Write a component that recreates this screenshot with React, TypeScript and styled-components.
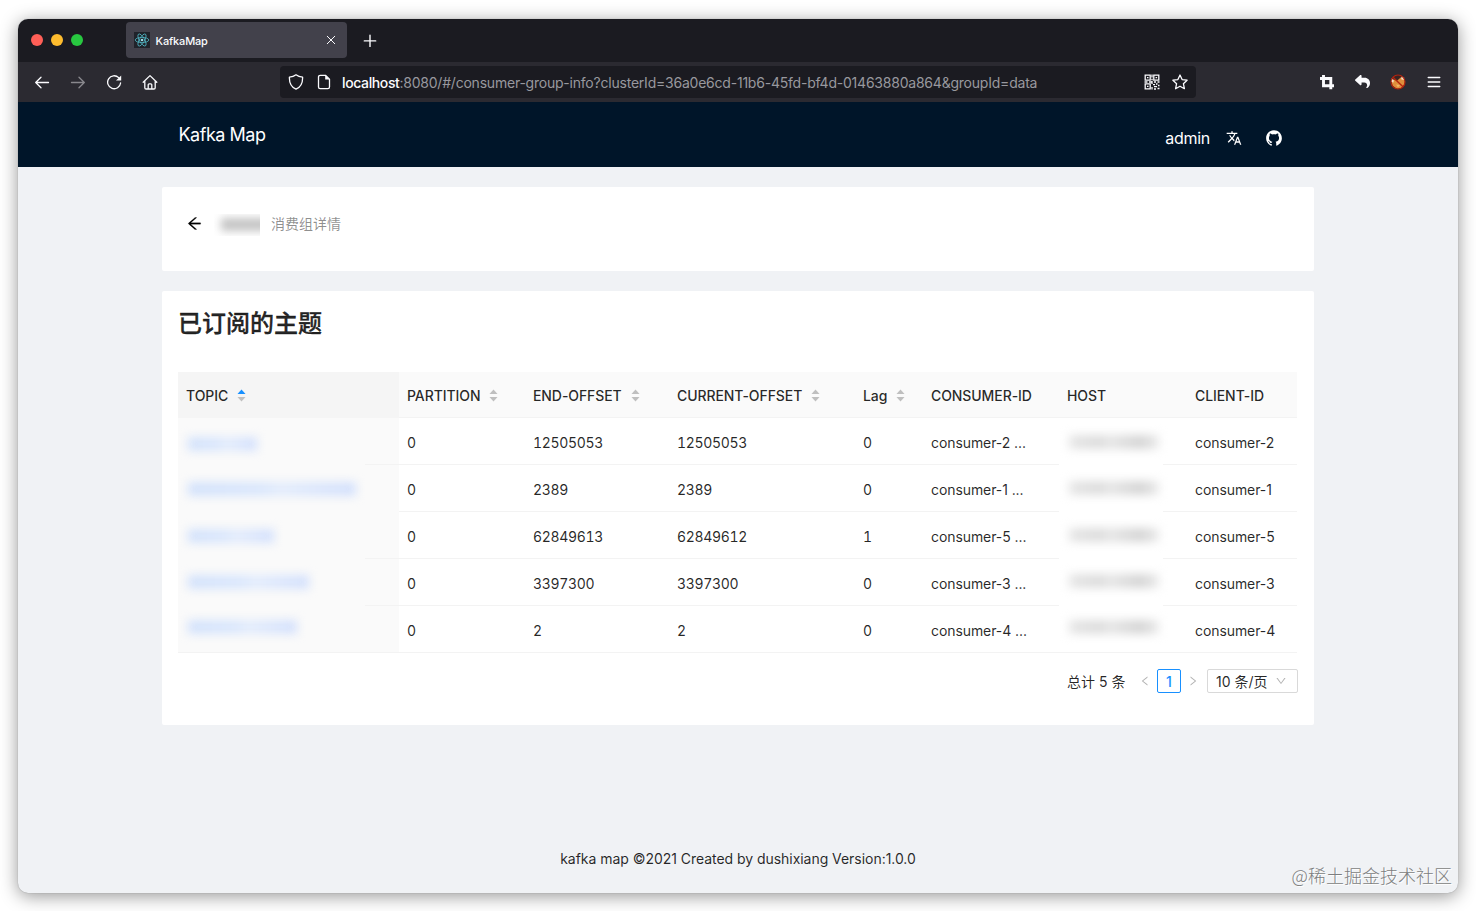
import React from 'react';
import styled, { createGlobalStyle, css } from 'styled-components';
import { AiOutlineArrowLeft, AiOutlineLeft, AiOutlineRight, AiOutlineDown, AiFillGithub } from 'react-icons/ai';
import { MdTranslate } from 'react-icons/md';
import { FaReply } from 'react-icons/fa6';

const GlobalStyle = createGlobalStyle`
  * { box-sizing: border-box; }
  body {
    margin: 0;
    background: #fff;
    font-family: Inter, "Noto Sans CJK SC", sans-serif;
    font-size: 14px;
    color: rgba(0, 0, 0, 0.85);
  }
  svg { display: block; flex: none; }
`;

const Desktop = styled.div`
  height: 911px;
  padding: 19px 18px 18px;
  overflow: hidden;
`;

const BrowserWindow = styled.div`
  position: relative;
  height: 874px;
  display: flex;
  flex-direction: column;
  border-radius: 10px;
  overflow: hidden;
  background: #f0f2f5;
  box-shadow: 0 0 1px rgba(0, 0, 0, 0.35), 0 3px 18px rgba(0, 0, 0, 0.42);
`;

const TabBar = styled.div`
  height: 43px;
  flex: none;
  display: flex;
  align-items: center;
  background: #1b1b21;
  padding: 0 0 1px 13px;
`;

const Lights = styled.div`
  display: flex;
  gap: 8px;
  width: 95px;
`;

const Light = styled.span<{ $color: string }>`
  width: 12px;
  height: 12px;
  border-radius: 50%;
  background: ${(p) => p.$color};
`;

const Tab = styled.div`
  width: 221px;
  height: 36px;
  border-radius: 4px;
  background: #42414b;
  display: flex;
  align-items: center;
  padding: 0 11px 0 8px;
  color: #fbfbfe;
  font-size: 11px;
  font-weight: 500;
  letter-spacing: -0.15px;
`;

const TabTitle = styled.span`
  flex: 1;
  padding: 2px 0 0 5.5px;
`;

const NewTab = styled.div`
  margin-left: 16px;
`;

const Toolbar = styled.div`
  height: 40px;
  flex: none;
  display: flex;
  align-items: center;
  background: #2b2a31;
  color: #fbfbfe;
  padding: 0 16px;
`;

const NavButtons = styled.div`
  width: 246px;
  display: flex;
  gap: 20px;
`;

const Dim = styled.span`
  opacity: 0.45;
`;

const AddressBar = styled.div`
  width: 916px;
  height: 32px;
  border-radius: 4px;
  background: #1b1b21;
  display: flex;
  align-items: center;
  gap: 12px;
  padding: 0 8px;
`;

const Url = styled.span`
  flex: 1;
  font-size: 14px;
  letter-spacing: -0.22px;
  color: #98989e;
  padding-top: 1px;
  margin-left: -2px;
  white-space: nowrap;
`;

const UrlHost = styled.span`
  color: #fbfbfe;
  font-weight: 500;
  letter-spacing: -0.38px;
`;

const Extensions = styled.div`
  flex: 1;
  display: flex;
  justify-content: flex-end;
  gap: 20px;
`;

const Header = styled.header`
  height: 65px;
  flex: none;
  display: flex;
  justify-content: space-between;
  background: #001529;
  padding: 0 175px 0 160.5px;
  color: #fff;
`;

const Brand = styled.div`
  font-size: 18px;
  line-height: 66px;
  letter-spacing: -0.48px;
`;

const HeaderActions = styled.div`
  display: flex;
  align-items: center;
  padding-top: 6px;
  font-size: 16px;
  letter-spacing: -0.3px;
`;

const UserName = styled.span`
  margin-right: 16px;
`;

const Repository = styled.span`
  margin-left: 23px;
`;

const Content = styled.main`
  flex: 1;
  display: flex;
  flex-direction: column;
  gap: 20px;
  padding: 20px 144px 0;
`;

const Card = styled.section<{ $height: number }>`
  height: ${(p) => p.$height}px;
  background: #fff;
  border-radius: 2px;
`;

const PageHeading = styled.div`
  display: flex;
  align-items: center;
  padding: 22px 24px 0;
  height: 50px;
  color: #000;
`;

const Subtitle = styled.span`
  color: rgba(0, 0, 0, 0.45);
  font-size: 14px;
`;

const HiddenName = styled.span`
  width: 46px;
  height: 22px;
  margin: 3px 11px 0 11px;
  overflow: hidden;
  display: flex;
  align-items: center;
`;

const HiddenNameInk = styled.span`
  width: 50px;
  flex: none;
  height: 13px;
  margin: 0 0 0 7px;
  background: #c4c4c4;
  filter: blur(4px);
`;

const TableCard = styled(Card)`
  padding: 0 16px;
`;

const Title = styled.h2`
  margin: 0;
  height: 81px;
  padding-top: 15px;
  font-size: 24px;
  line-height: 36px;
  font-weight: 500;
  -webkit-text-stroke: 0.35px currentColor;
`;

const Table = styled.table`
  width: 1119px;
  table-layout: fixed;
  border-collapse: separate;
  border-spacing: 0;
  letter-spacing: -0.08px;
`;

const cell = css`
  height: 47px;
  padding: 1px 8px 0;
  text-align: left;
  border-bottom: 1px solid #f3f3f3;
  white-space: nowrap;
`;

const HeadCell = styled.th<{ $sorted?: boolean }>`
  ${cell}
  height: 46px;
  font-weight: 500;
  background: ${(p) => (p.$sorted ? '#f5f5f5' : '#fafafa')};
  ${(p) => p.$sorted && 'border-bottom-color: #f5f5f5;'}
`;

const HeadLabel = styled.span`
  display: flex;
  align-items: center;
  gap: 9px;
`;

const Cell = styled.td<{ $sorted?: boolean }>`
  ${cell}
  padding-top: 2px;
  position: relative;
  background: ${(p) => (p.$sorted ? '#fafafa' : '#fff')};
`;

const NumberCell = styled(Cell)`
  font-variant-numeric: tabular-nums;
  letter-spacing: -0.33px;
`;

/* Veil over an anonymised value; it also hides part of the row divider. */
const Veil = styled.span<{ $width: number; $tone: string; $last: boolean }>`
  position: absolute;
  top: 0;
  left: 0;
  width: ${(p) => p.$width}px;
  bottom: ${(p) => (p.$last ? 0 : -1)}px;
  background: ${(p) => p.$tone};
  display: flex;
  align-items: center;
`;

const Smudge = styled.span<{ $width: number; $color: string; $shift: number }>`
  width: ${(p) => p.$width}px;
  height: 14px;
  margin: ${(p) => p.$shift}px 0 0 10px;
  filter: blur(5px);
  background: ${(p) => p.$color};
`;

const Pagination = styled.div`
  display: flex;
  align-items: center;
  justify-content: flex-end;
  margin-top: 16px;
  height: 24px;
`;

const Total = styled.span`
  margin-right: 13.5px;
`;

const Arrow = styled.span`
  color: rgba(0, 0, 0, 0.3);
`;

const PageNumber = styled.span`
  width: 24px;
  height: 24px;
  margin: 0 6px;
  border: 1px solid #1890ff;
  border-radius: 2px;
  color: #1890ff;
  font-weight: 500;
  line-height: 23px;
  text-align: center;
`;

const PageSize = styled.span`
  display: flex;
  align-items: center;
  justify-content: space-between;
  width: 91px;
  height: 24px;
  margin-left: 8px;
  padding: 0 10px 0 8px;
  border: 1px solid #d9d9d9;
  border-radius: 2px;
  svg { color: rgba(0, 0, 0, 0.3); }
`;

const Footer = styled.footer`
  flex: none;
  height: 46px;
  text-align: center;
  line-height: 23px;
  letter-spacing: -0.04px;
`;

const Watermark = styled.span`
  position: absolute;
  right: 6px;
  bottom: 5px;
  font-size: 18px;
  font-weight: 300;
  font-family: "Noto Sans CJK SC", sans-serif;
  line-height: 26px;
  color: #7d7e80;
  text-shadow: 1px 1px 0 #fff;
  white-space: nowrap;
`;

type StrokeProps = { size?: number; width?: number; children: React.ReactNode };
const Stroke = ({ size = 16, width = 1.3, children }: StrokeProps) => (
  <svg width={size} height={size} viewBox="0 0 16 16" fill="none" stroke="currentColor" strokeWidth={width} strokeLinecap="round" strokeLinejoin="round">
    {children}
  </svg>
);

const ReactLogo = () => (
  <svg width="16" height="16" viewBox="0 0 16 16" fill="none" stroke="#4fb0bd" strokeWidth="0.85">
    <rect width="16" height="16" fill="#20232a" stroke="none" />
    <ellipse cx="8" cy="8" rx="6.8" ry="2.6" />
    <ellipse cx="8" cy="8" rx="6.8" ry="2.6" transform="rotate(60 8 8)" />
    <ellipse cx="8" cy="8" rx="6.8" ry="2.6" transform="rotate(120 8 8)" />
    <circle cx="8" cy="8" r="1.3" fill="#9adfe8" stroke="none" />
  </svg>
);

const CropIcon = () => (
  <svg width="16" height="16" viewBox="0 0 16 16" fill="none" stroke="currentColor" strokeWidth="2.9">
    <path d="M1 4.5h10.8v10.7M4.5 1v10.7H15" />
  </svg>
);

const QrIcon = () => (
  <svg width="16" height="16" viewBox="0 0 16 16" fill="none" stroke="currentColor" strokeWidth="1.3">
    <path d="M1.2 1.2h5v5h-5zM9.8 1.2h5v5h-5zM1.2 9.8h5v5h-5z" />
    <path d="M3 3.7h1.5M11.6 3.7h1.5M3 12.3h1.5M8 .5v3M7.3 5.5h1.4M.5 8h3M5 8h2.5M8 7v3M10 8h2M13.5 8h2M9 10.7h2M12 10h1.5M14 11.5h1.5M8 13v2.5M10 12.7h3M10 15h2M13.5 14.5h2" />
  </svg>
);

const BlockedFox = () => (
  <svg width="16" height="16" viewBox="0 0 16 16">
    <circle cx="8" cy="8" r="7" fill="#3a2422" />
    <path d="M1.5 6.5 4 5.5l3 1.2L11 3.2l2.5 1 1.4 3-.7 4L11 14.2l-4 .5-4.5-3z" fill="#e08f3c" />
    <path d="M1.2 4.5 3.8 6 3.5 8.5 1.2 8zM11.5 2.2l2.8 1.6-.6 2.2-2.4-.8z" fill="#f7e3c9" />
    <path d="m6 10.5 4 .5-2 2.6z" fill="#f2b566" />
    <circle cx="8" cy="8" r="7" fill="none" stroke="#b3230f" strokeWidth="1.2" />
    <path d="m3 3.2 10 9.6" stroke="#b3230f" strokeWidth="1.3" />
  </svg>
);

const Sorter = ({ active }: { active?: boolean }) => (
  <svg width="9" height="13" viewBox="0 0 9 13">
    <path d="M4.5.6 8.5 5h-8z" fill={active ? '#1890ff' : '#bfbfbf'} />
    <path d="M4.5 12.4 8.5 8h-8z" fill="#bfbfbf" />
  </svg>
);

const columns = [
  { label: 'TOPIC', width: 221, sortable: true, sorted: true },
  { label: 'PARTITION', width: 126, sortable: true },
  { label: 'END-OFFSET', width: 144, sortable: true },
  { label: 'CURRENT-OFFSET', width: 186, sortable: true },
  { label: 'Lag', width: 68, sortable: true },
  { label: 'CONSUMER-ID', width: 136 },
  { label: 'HOST', width: 128 },
  { label: 'CLIENT-ID', width: 110 },
];

const rows = [
  { smudge: 69, veil: 187, shift: 5, end: '12505053', current: '12505053', lag: 0, client: 'consumer-2' },
  { smudge: 168, veil: 221, shift: 1, end: '2389', current: '2389', lag: 0, client: 'consumer-1' },
  { smudge: 86, veil: 187, shift: 0, end: '62849613', current: '62849612', lag: 1, client: 'consumer-5' },
  { smudge: 121, veil: 187, shift: -2, end: '3397300', current: '3397300', lag: 0, client: 'consumer-3' },
  { smudge: 109, veil: 187, shift: -4, end: '2', current: '2', lag: 0, client: 'consumer-4' },
];

const blueSmudge = 'linear-gradient(90deg, #d3e2fb, #dae7fc 45%, #e3ecfc 55%, #d3e0fc)';
const greySmudge = 'linear-gradient(90deg, #e6e6e6, #dcdcdc 35%, #e6e6e6 45%, #d4d4d4 80%, #ececec)';

export default function App() {
  return (
    <Desktop>
      <GlobalStyle />
      <BrowserWindow>
        <TabBar>
          <Lights>
            <Light $color="#ff5f57" />
            <Light $color="#febc2e" />
            <Light $color="#28c840" />
          </Lights>
          <Tab>
            <ReactLogo />
            <TabTitle>KafkaMap</TabTitle>
            <Stroke size={10} width={1.6}><path d="m2 2 12 12M14 2 2 14" /></Stroke>
          </Tab>
          <NewTab>
            <Stroke size={14} width={1.6}><g stroke="#fbfbfe"><path d="M8 2.5v13M1.5 9h13" /></g></Stroke>
          </NewTab>
        </TabBar>
        <Toolbar>
          <NavButtons>
            <Stroke><path d="M14.5 8.5H1.7M7 3.3 1.7 8.5 7 13.7" /></Stroke>
            <Dim><Stroke><path d="M1.5 8.5h12.8M9 3.3l5.3 5.2L9 13.7" /></Stroke></Dim>
            <Stroke>
              <path d="M14.6 9A6.5 6.5 0 1 1 12.7 3.6" />
              <path d="M15.2 1.4v5.2H10z" fill="currentColor" stroke="none" />
            </Stroke>
            <Stroke><path d="M1.2 8.3 8 1.6l6.8 6.7M2.8 7.3v6.4c0 .8.5 1.3 1.3 1.3h7.8c.8 0 1.3-.5 1.3-1.3V7.3M6.2 14.8v-4c0-.6.4-1 1-1h1.6c.6 0 1 .4 1 1v4" /></Stroke>
          </NavButtons>
          <AddressBar>
            <Stroke><path d="M8 .8C6.3 2.1 4 2.9 1.4 3.1c-.2 5.3 1.8 9.9 6.6 12.1 4.8-2.2 6.8-6.8 6.6-12.1C12 2.9 9.7 2.1 8 .8z" /></Stroke>
            <Stroke>
              <path d="M9.5 1.3H4.2c-1 0-1.7.6-1.7 1.6v10.2c0 1 .7 1.6 1.7 1.6h7.6c1 0 1.7-.6 1.7-1.6V5.3z" />
              <path d="M9.2 1.3v4.3h4.3z" fill="currentColor" stroke="none" />
            </Stroke>
            <Url>
              <UrlHost>localhost</UrlHost>:8080/#/consumer-group-info?clusterId=36a0e6cd-11b6-45fd-bf4d-01463880a864&amp;groupId=data
            </Url>
            <QrIcon />
            <Stroke><path d="m8 1 2.1 4.6 5 .6-3.7 3.5 1 5L8 12.2l-4.4 2.5 1-5L.9 6.2l5-.6z" /></Stroke>
          </AddressBar>
          <Extensions>
            <CropIcon />
            <FaReply size={15} />
            <BlockedFox />
            <Stroke><path d="M2.2 3.5h11.6M2.2 8h11.6M2.2 12.5h11.6" /></Stroke>
          </Extensions>
        </Toolbar>
        <Header>
          <Brand>Kafka Map</Brand>
          <HeaderActions>
            <UserName>admin</UserName>
            <MdTranslate size={16} />
            <Repository><AiFillGithub size={18} /></Repository>
          </HeaderActions>
        </Header>
        <Content>
          <Card $height={84}>
            <PageHeading>
              <AiOutlineArrowLeft size={17} strokeWidth={16} />
              <HiddenName><HiddenNameInk /></HiddenName>
              <Subtitle>消费组详情</Subtitle>
            </PageHeading>
          </Card>
          <TableCard $height={434}>
            <Title>已订阅的主题</Title>
            <Table>
              <colgroup>
                {columns.map((c) => <col key={c.label} width={c.width} />)}
              </colgroup>
              <thead>
                <tr>
                  {columns.map((c) => (
                    <HeadCell key={c.label} $sorted={c.sorted}>
                      <HeadLabel>{c.label}{c.sortable && <Sorter active={c.sorted} />}</HeadLabel>
                    </HeadCell>
                  ))}
                </tr>
              </thead>
              <tbody>
                {rows.map((r, i) => {
                  const last = i === rows.length - 1;
                  return (
                    <tr key={r.client}>
                      <Cell $sorted>
                        <Veil $width={r.veil} $tone="#fafafa" $last={last}>
                          <Smudge $width={r.smudge} $color={blueSmudge} $shift={r.shift} />
                        </Veil>
                      </Cell>
                      <NumberCell>0</NumberCell>
                      <NumberCell>{r.end}</NumberCell>
                      <NumberCell>{r.current}</NumberCell>
                      <NumberCell>{r.lag}</NumberCell>
                      <Cell>{r.client} ...</Cell>
                      <Cell>
                        <Veil $width={104} $tone="#fff" $last={last}>
                          <Smudge $width={90} $color={greySmudge} $shift={-i} />
                        </Veil>
                      </Cell>
                      <Cell>{r.client}</Cell>
                    </tr>
                  );
                })}
              </tbody>
            </Table>
            <Pagination>
              <Total>总计 5 条</Total>
              <Arrow><AiOutlineLeft size={12} /></Arrow>
              <PageNumber>1</PageNumber>
              <Arrow><AiOutlineRight size={12} /></Arrow>
              <PageSize>10 条/页<AiOutlineDown size={12} /></PageSize>
            </Pagination>
          </TableCard>
        </Content>
        <Footer>kafka map ©2021 Created by dushixiang Version:1.0.0</Footer>
        <Watermark>@稀土掘金技术社区</Watermark>
      </BrowserWindow>
    </Desktop>
  );
}
